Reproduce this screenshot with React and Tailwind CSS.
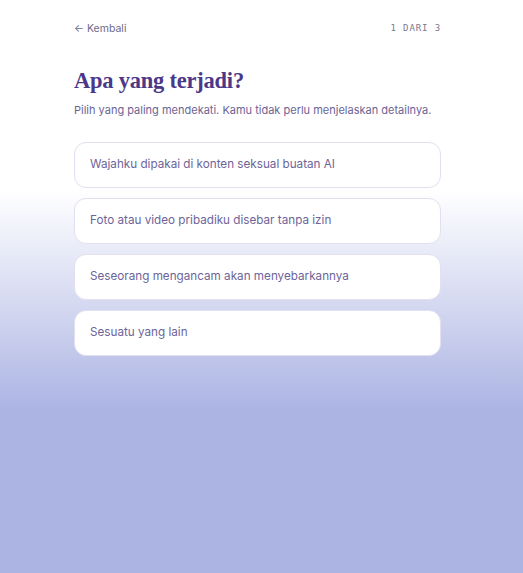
export default function App() {
  const options = [
    "Wajahku dipakai di konten seksual buatan AI",
    "Foto atau video pribadiku disebar tanpa izin",
    "Seseorang mengancam akan menyebarkannya",
    "Sesuatu yang lain",
  ];

  return (
    <div className="min-h-[573px] w-full pl-[74px] bg-[linear-gradient(to_bottom,#ffffff_0px,#ffffff_190px,#d6daf1_300px,#acb4e3_410px,#acb4e3_100%)] font-['Inter',sans-serif]">
      <div className="w-[367px] pt-[22px]">
        <div className="flex items-center justify-between h-[14px]">
          <span className="text-[10.5px] text-[#6e6a8a]">← Kembali</span>
          <span className="text-[9px] tracking-[0.1em] text-[#7a7890] font-['DejaVu_Sans_Mono',monospace]">
            1 DARI 3
          </span>
        </div>

        <h1 className="mt-[30px] text-[22.5px] leading-[30px] font-bold tracking-[-0.01em] text-[#4b3889] font-['Liberation_Serif',serif]">
          Apa yang terjadi?
        </h1>
        <p className="mt-[6px] text-[11px] leading-[16px] text-[#6b6495]">
          Pilih yang paling mendekati. Kamu tidak perlu menjelaskan detailnya.
        </p>

        <div className="mt-[24px] flex flex-col gap-[10px]">
          {options.map((o) => (
            <button
              key={o}
              className="h-[46px] w-full rounded-[12px] border border-[#e2dff0] bg-white px-[15px] text-left text-[11.7px] text-[#6d6499]"
            >
              {o}
            </button>
          ))}
        </div>
      </div>
    </div>
  );
}
